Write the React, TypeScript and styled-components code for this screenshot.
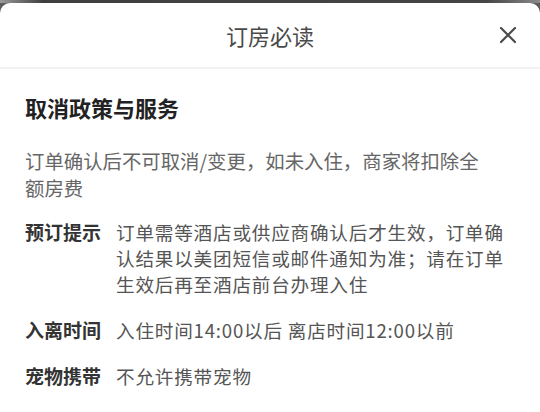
import React from "react";
import styled, { createGlobalStyle } from "styled-components";

const GlobalStyle = createGlobalStyle`
  html, body {
    margin: 0;
    padding: 0;
    background: #5c5c5c;
    font-family: "Noto Sans CJK SC", "Noto Sans", sans-serif;
  }
`;

type Rule = {
  label: string;
  lines: string[];
};

const rules: Rule[] = [
  {
    label: "预订提示",
    lines: [
      "订单需等酒店或供应商确认后才生效，订单确",
      "认结果以美团短信或邮件通知为准；请在订单",
      "生效后再至酒店前台办理入住",
    ],
  },
  { label: "入离时间", lines: ["入住时间14:00以后 离店时间12:00以前"] },
  { label: "宠物携带", lines: ["不允许携带宠物"] },
];

const CloseIcon = () => (
  <svg width="18" height="18" viewBox="0 0 18 18">
    <path
      d="M2 2 L16 16 M16 2 L2 16"
      stroke="#4a4a4a"
      strokeWidth="2.2"
      strokeLinecap="round"
    />
  </svg>
);

const App = () => (
  <>
    <GlobalStyle />
    <Backdrop />
    <Sheet>
      <Header>
        <Title>订房必读</Title>
        <CloseButton>
          <CloseIcon />
        </CloseButton>
      </Header>
      <Body>
        <SectionTitle>取消政策与服务</SectionTitle>
        <Notice>
          订单确认后不可取消/变更，如未入住，商家将扣除全
          <br />
          额房费
        </Notice>
        <RuleList>
          {rules.map((rule) => (
            <RuleRow key={rule.label}>
              <RuleLabel>{rule.label}</RuleLabel>
              <RuleValue>
                {rule.lines.map((line, i) => (
                  <React.Fragment key={line}>
                    {i > 0 && <br />}
                    {line}
                  </React.Fragment>
                ))}
              </RuleValue>
            </RuleRow>
          ))}
        </RuleList>
      </Body>
    </Sheet>
  </>
);

const Backdrop = styled.div`
  height: 3px;
  background: linear-gradient(90deg, #9a9a9a 0, #3f3f3f 8%, #454545 90%, #8a8a8a 100%);
`;

const Sheet = styled.div`
  background: #fff;
  border-radius: 10px 10px 0 0;
  height: 409px;
  overflow: hidden;
`;

const Header = styled.div`
  position: relative;
  display: flex;
  align-items: center;
  justify-content: center;
  height: 64px;
  border-bottom: 2px solid #f2f2f2;
`;

const Title = styled.h2`
  margin: 0;
  font-size: 22px;
  font-weight: 400;
  color: #4a4a4a;
`;

const CloseButton = styled.span`
  position: absolute;
  right: 23px;
  top: 23px;
  display: flex;
`;

const Body = styled.div`
  padding: 23px 25px 0;
`;

const SectionTitle = styled.h3`
  margin: 0;
  font-size: 22px;
  line-height: 30px;
  font-weight: 700;
  color: #222;
`;

const Notice = styled.p`
  margin: 25px 0 0;
  font-size: 19.4px;
  line-height: 27px;
  color: #666;
`;

const RuleList = styled.div`
  display: flex;
  flex-direction: column;
  gap: 20px;
  margin-top: 18px;
`;

const RuleRow = styled.div`
  display: flex;
  gap: 15px;
  line-height: 26px;
`;

const RuleLabel = styled.span`
  flex: none;
  font-size: 19px;
  font-weight: 700;
  color: #333;
`;

const RuleValue = styled.p`
  margin: 0;
  font-size: 18.6px;
  letter-spacing: 0.8px;
  color: #555;
`;

export default App;
